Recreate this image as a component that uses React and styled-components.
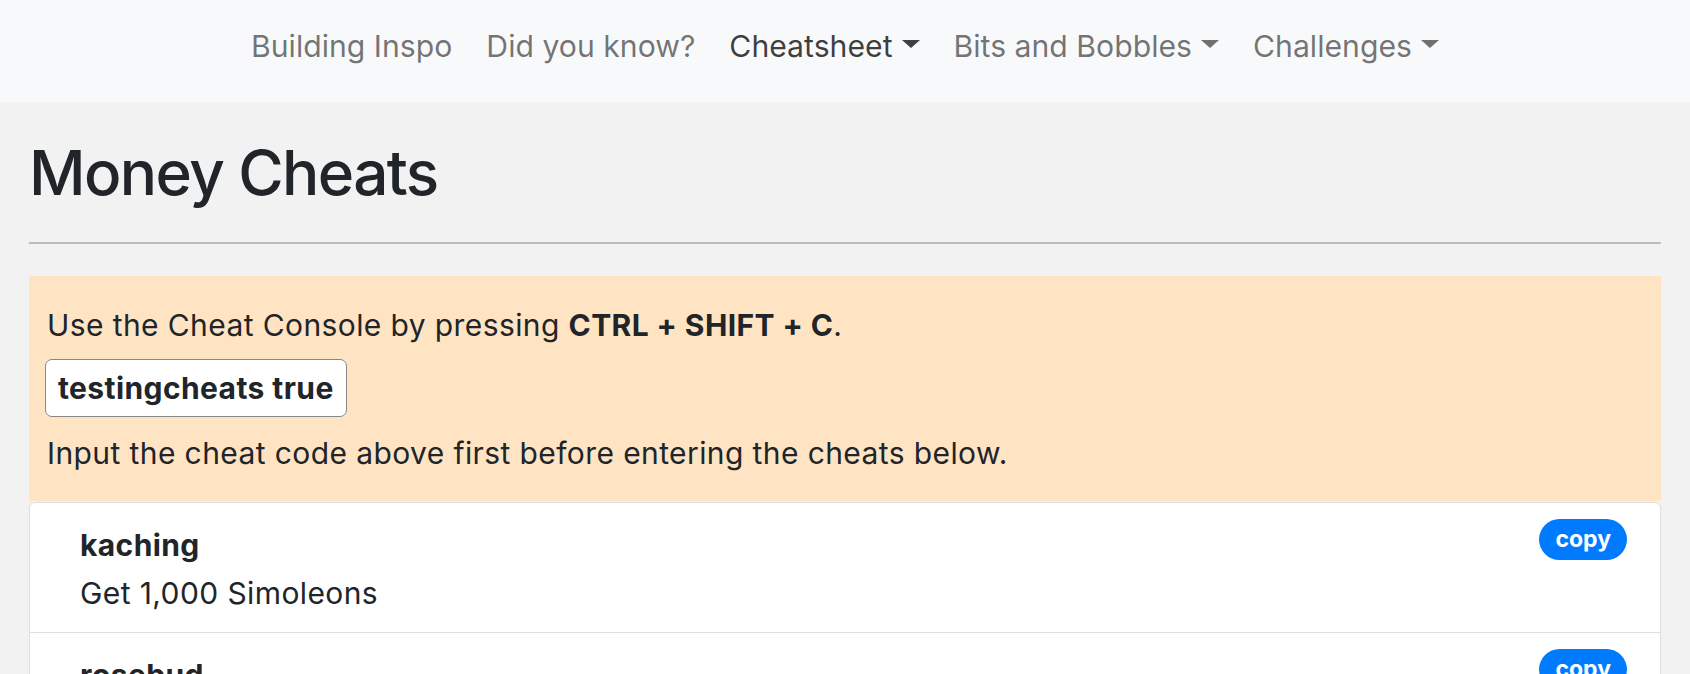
import React from 'react'
import styled, { createGlobalStyle } from 'styled-components'

const GlobalStyle = createGlobalStyle`
  body {
    margin: 0;
    background: #f2f2f2;
    font-family: Inter, "Noto Sans", sans-serif;
    color: #212529;
  }
`

const navItems = [
  { label: 'Building Inspo' },
  { label: 'Did you know?' },
  { label: 'Cheatsheet', dropdown: true, active: true },
  { label: 'Bits and Bobbles', dropdown: true },
  { label: 'Challenges', dropdown: true },
]

const cheats = [
  { code: 'kaching', effect: 'Get 1,000 Simoleons' },
  { code: 'rosebud', effect: 'Get 1,000 Simoleons' },
]

function App() {
  return (
    <>
      <GlobalStyle />
      <Navbar>
        {navItems.map((item) => (
          <NavLink key={item.label} $active={item.active}>
            {item.label}
            {item.dropdown && <Caret />}
          </NavLink>
        ))}
      </Navbar>
      <Main>
        <Title>Money Cheats</Title>
        <Rule />
        <Notice>
          <NoticeLine>
            Use the Cheat Console by pressing <strong>CTRL + SHIFT + C</strong>.
          </NoticeLine>
          <Code>testingcheats true</Code>
          <NoticeLine $gap>Input the cheat code above first before entering the cheats below.</NoticeLine>
        </Notice>
        <List>
          {cheats.map((cheat) => (
            <Item key={cheat.code}>
              <ItemText>
                <CheatCode>{cheat.code}</CheatCode>
                <Effect>{cheat.effect}</Effect>
              </ItemText>
              <CopyBadge>copy</CopyBadge>
            </Item>
          ))}
        </List>
      </Main>
    </>
  )
}

const Navbar = styled.nav`
  height: 102px;
  box-sizing: border-box;
  padding-bottom: 10px;
  background: #f8f9fa;
  display: flex;
  justify-content: center;
  align-items: center;
`
const NavLink = styled.a`
  display: flex;
  align-items: center;
  padding: 0 17px;
  font-size: 30.2px;
  color: ${(p) => (p.$active ? 'rgba(0,0,0,.75)' : 'rgba(0,0,0,.55)')};
  cursor: pointer;
`
const Caret = styled.span`
  width: 0;
  height: 0;
  margin-left: 9px;
  border-top: 8px solid currentColor;
  border-left: 9px solid transparent;
  border-right: 9px solid transparent;
  margin-top: -4px;
`
const Main = styled.main`
  padding: 0 29px;
`
const Title = styled.h1`
  margin: 34px 0 0;
  font-size: 62px;
  font-weight: 500;
  letter-spacing: -1.6px;
  line-height: 1.2;
`
const Rule = styled.hr`
  margin: 32px 0;
  border: 0;
  border-top: 2px solid #bdbdbd;
`
const Notice = styled.div`
  background: bisque;
  padding: 28px 16px 27px;
  font-size: 30px;
  letter-spacing: 0.4px;
  line-height: 42px;
`
const NoticeLine = styled.div`
  margin-top: ${(p) => (p.$gap ? '15px' : '0')};
  padding-left: 2px;
`
const Code = styled.div`
  display: inline-block;
  margin-top: 13px;
  padding: 7px 12px;
  background: #fff;
  border: 1px solid #888;
  border-radius: 7px;
  font-weight: 700;
`
const List = styled.div`
  margin-top: 1px;
  background: #fff;
  border: 1px solid rgba(0,0,0,.125);
  border-radius: 6px;
  font-size: 30px;
  letter-spacing: 0.4px;
  line-height: 42px;
`
const Item = styled.div`
  display: flex;
  justify-content: space-between;
  align-items: flex-start;
  padding: 16px 33px 18px 50px;
  & + & {
    border-top: 1px solid rgba(0,0,0,.125);
  }
`
const ItemText = styled.div`
  margin-top: 5px;
`
const CheatCode = styled.div`
  font-weight: 700;
  margin-bottom: 6px;
`
const Effect = styled.div``
const CopyBadge = styled.span`
  height: 41px;
  line-height: 41px;
  padding: 0 16px;
  border-radius: 21px;
  background: #007bff;
  color: #fff;
  font-size: 23px;
  letter-spacing: 0;
  font-weight: 700;
`

export default App
